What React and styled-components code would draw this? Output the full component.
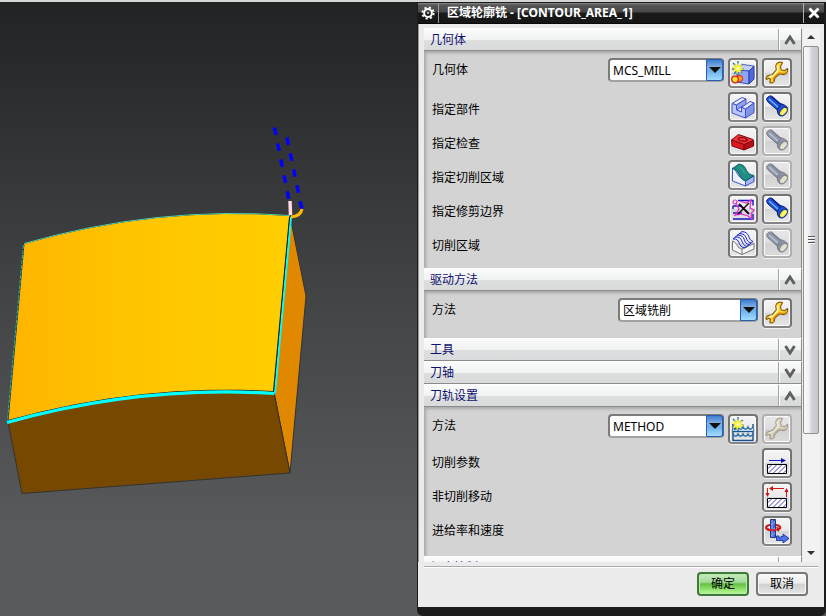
import React, { useState } from "react";
import styled, { createGlobalStyle, css } from "styled-components";

const GlobalStyle = createGlobalStyle`
  *, *::before, *::after { box-sizing: border-box; }
  body { margin: 0; background: #585858; }
  body, button, select {
    font-family: "Noto Sans", "Noto Sans CJK SC", sans-serif;
    font-size: 12px; color: #000;
  }
`;

const Screen = styled.div`
  display: flex; height: 100vh; overflow: hidden;
  border-top: 2px solid #d4d8d4;
  background: linear-gradient(#222324, #414243 45%, #58595a 85%);
`;
const Viewport = styled.main` flex: 1; min-width: 0; `;
const Scene = styled.svg` display: block; width: 100%; height: 100%; `;

const Dialog = styled.section`
  display: flex; flex-direction: column; flex: 0 0 409px;
  border: solid #1c1c1c; border-width: 1px 2px 9px 1px;
  border-radius: 0 0 6px 6px;
  background: #ebebeb;
`;

const TitleBar = styled.header`
  display: flex; align-items: stretch; height: 21px; flex-shrink: 0;
  background: linear-gradient(#8a8a8a, #565656 10%, #484848 45%, #1a1a1a 50%, #161616);
  border-bottom: 1px solid #0a0a0a;
`;
const TitleButton = styled.button`
  display: grid; place-items: center; width: 21px; padding: 0;
  border: 0; background: none;
  ${({ $side }) => ($side === "left"
    ? css` border-right: 1px solid #9a9a9a; `
    : css` border-left: 1px solid #b0b0b0; `)}
`;
const Title = styled.h1`
  flex: 1; margin: 0; padding-left: 8px;
  font-size: 12px; font-weight: 700; line-height: 19px; color: #fff; white-space: pre;
`;

const Body = styled.div`
  display: flex; flex: 1; min-height: 0; padding: 4px 4px 0 5px;
  border-left: 1px solid #9c9c9c;
`;
const Sections = styled.div`
  flex: 1; min-width: 0; overflow: hidden;
`;

const SectionHeader = styled.button`
  display: flex; align-items: stretch; width: 100%; height: 23px; padding: 0;
  border: 0; border-top: 1px solid #fff; border-bottom: 1px solid #8c8c8c;
  border-right: 1px solid #8c8c8c;
  background: linear-gradient(#fafbfb, #f1f2f2 50%, #dddfdf 55%, #d8dadb);
  color: #10106e; text-align: left;
`;
const SectionName = styled.span` flex: 1; padding-left: 6px; line-height: 21px; `;
const ChevronBox = styled.span`
  display: grid; place-items: center; width: 23px;
  border-left: 1px solid #a4a4a4; box-shadow: inset 1px 0 #fff;
`;
const SectionBody = styled.div`
  display: flex; flex-direction: column; gap: 4px;
  padding: 7px 9px 10px 8px;
  border-right: 1px solid #8c8c8c;
  background: #d3d3d3;
  box-shadow: inset 2px 2px 3px #a8a8a8;
`;

const Row = styled.div` display: flex; align-items: flex-start; gap: 4px; min-height: 30px; `;
const Label = styled.label`
  flex: 1; line-height: 24px;
  padding-top: ${({ $drop }) => $drop}px;
`;

const Combo = styled.div` position: relative; width: ${({ $wide }) => ($wide ? 140 : 116)}px; height: 24px; `;
const Select = styled.select`
  width: 100%; height: 24px; padding: 0 20px 0 3px; appearance: none;
  border: 2px solid #7b7b7b; border-right-color: #4a6b98; border-bottom-color: #a2a2a2;
  border-radius: 4px; background: #fff; outline: 0;
`;
const ComboArrow = styled.span`
  position: absolute; top: 1px; right: 1px; bottom: 1px; width: 17px;
  display: grid; place-items: center; pointer-events: none;
  border: 1px solid #2b5fae; border-radius: 0 3px 3px 0;
  background: linear-gradient(#3d7fd2, #8ab5e6 40%, #6aaeea 50%, #9fdcff);
`;

const IconButton = styled.button`
  display: grid; place-items: center; width: 30px; height: 30px; padding: 0;
  border: 2px solid #747474; border-bottom-color: #858585; border-radius: 4px;
  background: linear-gradient(#f6f6f6, #e9e9e9 48%, #d4d5d6 52%, #e8e8e8);
  box-shadow: inset 0 0 0 1px #fafafa, 0 1px #f0f0f0;
  svg { display: block; }
  &:disabled {
    border-color: #b0b0b0;
    background: linear-gradient(#e8e8e8, #dedede 50%, #d2d2d2 52%, #dcdcdc);
    svg { opacity: 0.5; filter: saturate(0.3); }
  }
`;

const ScrollBar = styled.div`
  display: flex; flex-direction: column; width: 17px; margin-left: 1px; padding-right: 1px;
  background: #f2f2f2;
`;
const ScrollArrow = styled.button`
  display: grid; place-items: center; height: 18px; padding: 0; flex-shrink: 0;
  border: 0; background: none;
`;
const Track = styled.div` flex: 1; min-height: 0; `;
const Thumb = styled.div`
  display: flex; flex-direction: column; align-items: center; justify-content: center; gap: 1px;
  height: 78%;
  border: 1px solid #909090; border-radius: 2px;
  background: linear-gradient(90deg, #fafafa, #f0f0f1 35%, #d3d3d8 55%, #c6c6cd);
`;
const Grip = styled.span` width: 7px; height: 2px; background: #555; border-bottom: 1px solid #fff; `;

const Footer = styled.footer`
  display: flex; justify-content: flex-end; gap: 7px;
  margin-top: 4px; margin-left: 6px; margin-right: 6px; padding: 5px 10px 11px 0;
  border-top: 1px solid #aaa; box-shadow: inset 0 1px #fff;
`;
const ActionButton = styled.button`
  width: 52px; height: 24px; padding: 0; line-height: 18px;
  border: 2px solid ${({ $primary }) => ($primary ? "#3f7a3b" : "#777")};
  border-radius: 4px;
  background: ${({ $primary }) => ($primary
    ? "linear-gradient(#c4ecc0, #a4dc9c 40%, #64c044 50%, #b8ff98)"
    : "linear-gradient(#fafafa, #ececec 45%, #d0d1d3 52%, #e6e6e6)")};
  box-shadow: inset 0 0 0 1px ${({ $primary }) => ($primary ? "#b9e8aa" : "#f8f8f8")};
`;

const Icon = ({ children }) => (
  <svg width="26" height="26" viewBox="0 0 26 26" fill="none" aria-hidden="true">{children}</svg>
);

const Star = () => (
  <g>
    <path d="M3 3l3.6 3.4M8 1v4M13 4l-3 2.6M2 9h3M14 9.500l-3-.5M4 14l2.500-3M12 13l-2-2M8 15v-3" stroke="#26719c" strokeWidth="1.4" />
    <path d="M8 2l1.300 4L13 4.500 11 8l3.500 1.500-4 .8L11.500 13 8.500 11.500 7 14.500 6.200 11 2.500 12l2-3L1.500 7l4-.4L4 3.500l3 2z" fill="#fff12c" />
    <circle cx="8" cy="8.500" r="1.800" fill="#fffdc0" />
  </g>
);

const NewBlockIcon = () => (
  <Icon>
    <path d="M7 10l6-5.500 11 1.500-5 5z" fill="#c3d0fc" stroke="#4a60c8" strokeLinejoin="round" />
    <path d="M7 10l12 1v13L7 22z" fill="#8fa8f4" stroke="#3a50c0" strokeLinejoin="round" />
    <path d="M19 11l5-5v13l-5 5z" fill="#5468dc" stroke="#2c3aa8" strokeLinejoin="round" />
    <circle cx="9.500" cy="18.500" r="3.200" fill="#ff9a20" stroke="#e02010" />
    <circle cx="5" cy="19.500" r="3.300" fill="#ffe23a" stroke="#e02010" strokeWidth="1.300" />
    <Star />
  </Icon>
);

const WrenchIcon = () => (
  <Icon>
    <path
      d="M18.500 2.500C15 1.500 12 3 11.800 6c-.1 2 1 3 .2 4.200L8.500 14.500C7 16 5 14.800 3.200 16.200 2 17.200 1.800 18.500 2.300 19.500l2.700-1.200 1.500 1.200L5.800 22.500c1.700 1 3.800.3 4.500-1.500.5-1.600 0-2.400 1-3.500l3.500-3c1.500-1.300 2.700.3 4.700.2 3-.2 4.700-3 4-6.200l-3 2.200-3.300-.7-.7-3.500z"
      fill="#ffd535" stroke="#8b5c10" strokeWidth="1.200" strokeLinejoin="round"
    />
    <path d="M13.500 5.500c-.4 2 1 3.500 0 5.200L9.500 15.500 5 17" stroke="#fff8ae" strokeWidth="1.600" />
    <path d="M22.500 11.500c-1 2-3 2.300-5 1.500-2-.8-3 0-4.500 1.500L9.500 18v3.500" stroke="#d98e10" strokeWidth="1.200" />
  </Icon>
);

const FlashlightIcon = () => (
  <Icon>
    <path d="M2.500 5.500C3 3 5 1.500 7.500 2L16 9.500c2.500.5 5.500 1.500 7.300 4l-7 8.300c-2-.8-3-3-3-5.800L4 8z" fill="#1c4fd6" stroke="#0b1c70" />
    <path d="M5 5l9.500 8.500" stroke="#6fb2ff" strokeWidth="1.600" />
    <path d="M8 2.800l8 7.200" stroke="#0a2290" strokeWidth="1.600" />
    <path d="M13.500 16c.5-2.500 1.700-4.300 4-5.500" stroke="#0b1c70" />
    <ellipse cx="19.500" cy="17.500" rx="5" ry="3" transform="rotate(-50 19.500 17.500)" fill="#ffed3d" stroke="#173c9c" strokeWidth="1.200" />
    <path d="M18 20l3.500-4.500" stroke="#fffbc0" />
  </Icon>
);

const PartIcon = () => (
  <Icon>
    <g stroke="#4650c8" strokeLinejoin="round">
      <path d="M2 9.500L12 3.500l4 1.500-9.500 6z" fill="#e4ebff" />
      <path d="M6.500 11L16 5v5.500l-5 3.500-4.500 2z" fill="#8fa4ec" />
      <path d="M6.500 16l6-4 4 1-5 5z" fill="#dfe6ff" />
      <path d="M11.500 13.500L20 7.500l4 1.500-8.500 6z" fill="#e4ebff" />
      <path d="M2 9.500L6.500 11v5l5 2v-4.500l4 1.500v9L2 19z" fill="#b9c8fa" />
      <path d="M15.500 15L24 9v9.500L15.500 24z" fill="#8195e6" />
    </g>
  </Icon>
);

const CheckIcon = () => (
  <Icon>
    <g stroke="#7c0a0c" strokeLinejoin="round">
      <path d="M1.500 12l7-5.500L23 11.500v2L15 17z" fill="#f5333a" />
      <path d="M1.500 12L14 16.500V22L2 18z" fill="#df1820" />
      <path d="M14 16.500l9.500-4V18L14 22z" fill="#b80e15" />
      <path d="M8 11c0-2 4-2.500 9 0 2 1.500 0 2.500-3 2.200-3 0-6-1-6-2.200z" fill="#cc1620" />
    </g>
    <path d="M10 11.500c2-.8 3.500-.4 5 .4" stroke="#f45a5a" />
  </Icon>
);

const CutAreaIcon = () => (
  <Icon>
    <path d="M2.500 6c5 2 4 10 13 12v6L2.500 19z" fill="#eef2ff" stroke="#4058d0" />
    <path d="M15.500 19l8.500-5v5.500L15.500 24z" fill="#a6b7f4" stroke="#4058d0" />
    <path d="M2.500 6.500L9 2c5 1 6 3 7.500 6.500 1.500 3 4 4.500 7.500 5L15.500 19C9 17.500 10 8 2.500 6.500z" fill="#1f8d84" stroke="#0d5e60" />
    <path d="M9 5c4 1.500 4.500 4 6 7" stroke="#359d92" strokeWidth="1.500" />
  </Icon>
);

const TrimIcon = () => (
  <Icon>
    <path d="M8 4.500h15v5M23 18v5H3M3 10h9M3 17h9M3 10v3" stroke="#1414c4" strokeWidth="1.400" />
    <circle cx="5" cy="6" r="2" stroke="#e030c8" strokeWidth="1.200" />
    <path d="M6 8l3 5-4 6 6-1 7 2 4 3-1-5 3-4-4-2 1-8-5 3-6-2" stroke="#e030c8" strokeWidth="1.300" />
    <path d="M9 8l10 10" stroke="#180818" strokeWidth="2" />
    <path d="M19 7L8 18" stroke="#180818" strokeWidth="1.500" />
  </Icon>
);

const AreaLinesIcon = () => (
  <Icon>
    <path d="M2.500 11v9L12 24.500 24 19v-5.500L12 19c-5 0-4-6-9.500-8z" fill="#f6f6f6" stroke="#777" />
    <path d="M12 19v5" stroke="#777" />
    <g stroke="#1d27d0">
      <path d="M3 9c8-1 4 8 12 9M5 7c9-1 5 8 12 9.500M7 5c10 0 5 8 12 9.800M9 3.500c10 0 5 8 12 9.500M12 1.500c9 1 5 8 11 10" />
      <path d="M3 9l9-7.500M15 18l8-6.500" />
    </g>
  </Icon>
);

const MethodIcon = () => (
  <Icon>
    <path d="M3 8v16.500h20V8" stroke="#1c4f8f" strokeWidth="1.400" />
    <path d="M3 11c2 3 4 3 5 0 1 3 4 3 5 0 1 3 4 3 5 0 1 3 3 3 5 0v4.500H3z" fill="#dcebf8" />
    <path d="M3 11c2 3 4 3 5 0 1 3 4 3 5 0 1 3 4 3 5 0 1 3 3 3 5 0M3 18c2 3 4 3 5 0 1 3 4 3 5 0 1 3 4 3 5 0 1 3 3 3 5 0" stroke="#206aa8" strokeWidth="1.300" />
    <path d="M3 15.500h20" stroke="#1c4f8f" strokeWidth="1.200" />
    <Star />
  </Icon>
);

const HatchBox = () => (
  <g>
    <path d="M3.500 14.500h19v9h-19z" fill="#fff" />
    <path d="M4 18.500l4-4M4 23.500l9-9M9 23.500l9-9M14 23.500l8.500-8.500M19 23.500l3.500-3.500" stroke="#2a2aa8" strokeWidth="0.900" />
    <path d="M3.500 14.500h19v9h-19z" stroke="#000" />
  </g>
);

const CutParamsIcon = () => (
  <Icon>
    <path d="M5 10.500h13" stroke="#1818c8" />
    <path d="M17 8l5 2.500-5 2.500z" fill="#1010b0" />
    <HatchBox />
  </Icon>
);

const NonCutIcon = () => (
  <Icon>
    <path d="M8 4.500h12M3.500 4v6M22.500 7v6" stroke="#d01818" />
    <path d="M5 4.500L9 2v5zM3.500 13L1.500 9h4zM22.500 4l-2 4h4z" fill="#d01010" />
    <HatchBox />
  </Icon>
);

const FeedIcon = () => (
  <Icon>
    <path d="M8 12.500c-5-.4-7-2-5.500-4C4 7 7 6.800 9 6.800c5 0 8 1.400 7 3.200" stroke="#c81818" strokeWidth="2" />
    <path d="M6.500 1.500h5v18h-5z" fill="#4969cf" stroke="#24378e" />
    <path d="M8 2v17M7 7l4-3M7 13l4-3M7 18l4-3" stroke="#8fa8f0" />
    <path d="M3 10c2 2.500 7 2.500 11 1.500" stroke="#dc2020" strokeWidth="1.800" />
    <path d="M12 9l5.500 1-3.500 4z" fill="#c81818" />
    <path d="M12.500 18v4.500H19V25l6-4.500L19 16v2.500h-2V20h-2v-2z" fill="#4f73e8" stroke="#2440a8" />
  </Icon>
);

const GearIcon = () => (
  <svg width="14" height="14" viewBox="0 0 14 14" fill="none" aria-hidden="true">
    <circle cx="7" cy="7" r="5.600" stroke="#f4f4f4" strokeWidth="2" strokeDasharray="2.200" />
    <circle cx="7" cy="7" r="3.900" stroke="#fff" strokeWidth="2" />
    <circle cx="7" cy="7" r="1" fill="#ddd" />
  </svg>
);

const CloseIcon = () => (
  <svg width="12" height="12" viewBox="0 0 12 12" fill="none" aria-hidden="true">
    <path d="M1.500 1.500l9 9M10.500 1.500l-9 9" stroke="#fff" strokeWidth="2.800" />
  </svg>
);

const Chevron = ({ open }) => (
  <svg width="12" height="10" viewBox="0 0 12 10" fill="none" aria-hidden="true">
    <path d={open ? "M1.500 9L6 2 10.500 9" : "M1.500 1L6 8 10.500 1"} stroke="#606060" strokeWidth="2.900" />
  </svg>
);

const Triangle = ({ up, size = 8, color = "#333" }) => (
  <svg width={size} height={size} viewBox="0 0 8 8" aria-hidden="true">
    <path d={up ? "M0 6l4-4 4 4z" : "M0 2l4 4 4-4z"} fill={color} />
  </svg>
);

const groups = [
  {
    name: "几何体",
    open: true,
    labelDrop: 6,
    rows: [
      { label: "几何体", combo: "MCS_MILL", buttons: [{ icon: NewBlockIcon, name: "新建" }, { icon: WrenchIcon, name: "编辑" }] },
      { label: "指定部件", buttons: [{ icon: PartIcon, name: "选择" }, { icon: FlashlightIcon, name: "显示" }] },
      { label: "指定检查", buttons: [{ icon: CheckIcon, name: "选择" }, { icon: FlashlightIcon, name: "显示", disabled: true }] },
      { label: "指定切削区域", buttons: [{ icon: CutAreaIcon, name: "选择" }, { icon: FlashlightIcon, name: "显示", disabled: true }] },
      { label: "指定修剪边界", buttons: [{ icon: TrimIcon, name: "选择" }, { icon: FlashlightIcon, name: "显示" }] },
      { label: "切削区域", buttons: [{ icon: AreaLinesIcon, name: "选择" }, { icon: FlashlightIcon, name: "显示", disabled: true }] },
    ],
  },
  {
    name: "驱动方法",
    open: true,
    rows: [{ label: "方法", combo: "区域铣削", wide: true, buttons: [{ icon: WrenchIcon, name: "编辑" }] }],
  },
  { name: "工具", rows: [] },
  { name: "刀轴", rows: [] },
  {
    name: "刀轨设置",
    open: true,
    labelDrop: 3,
    rows: [
      { label: "方法", combo: "METHOD", buttons: [{ icon: MethodIcon, name: "新建" }, { icon: WrenchIcon, name: "编辑", disabled: true }] },
      { label: "切削参数", buttons: [{ icon: CutParamsIcon, name: "切削参数" }] },
      { label: "非切削移动", buttons: [{ icon: NonCutIcon, name: "非切削移动" }] },
      { label: "进给率和速度", buttons: [{ icon: FeedIcon, name: "进给率和速度" }] },
    ],
  },
  { name: "机床控制", rows: [] },
];

const Field = ({ id, row, drop }) => (
  <Row>
    <Label htmlFor={id} $drop={row.combo ? 0 : drop}>{row.label}</Label>
    {row.combo && (
      <Combo $wide={row.wide}>
        <Select id={id} defaultValue={row.combo}>
          <option>{row.combo}</option>
        </Select>
        <ComboArrow><Triangle size={12} color="#111" /></ComboArrow>
      </Combo>
    )}
    {row.buttons.map(({ icon: Glyph, name, disabled }, i) => (
      <IconButton key={i} type="button" id={!row.combo && i === 0 ? id : undefined} title={name} aria-label={name} disabled={disabled}>
        <Glyph />
      </IconButton>
    ))}
  </Row>
);

const Group = ({ group, index }) => {
  const [open, setOpen] = useState(Boolean(group.open));
  return (
    <div>
      <SectionHeader type="button" aria-expanded={open} onClick={() => setOpen(!open)}>
        <SectionName>{group.name}</SectionName>
        <ChevronBox><Chevron open={open} /></ChevronBox>
      </SectionHeader>
      {open && group.rows.length > 0 && (
        <SectionBody>
          {group.rows.map((row, i) => (
            <Field key={row.label} id={`field-${index}-${i}`} row={row} drop={group.labelDrop} />
          ))}
        </SectionBody>
      )}
    </div>
  );
};

const Model = () => (
  <Scene viewBox="0 2 417 614" preserveAspectRatio="xMinYMin meet" aria-hidden="true">
    <defs>
      <linearGradient id="top" x1="0" y1="0" x2="1" y2="0">
        <stop offset="0" stopColor="#ffb400" />
        <stop offset="0.4" stopColor="#ffc400" />
        <stop offset="1" stopColor="#ffce00" />
      </linearGradient>
    </defs>
    <path d="M290 216L306 296 290 473 274 392z" fill="#e08800" stroke="#333" />
    <path d="M8 422Q141 385 274 393L290 473 22 493.500z" fill="#764800" stroke="#333" />
    <path d="M24 243.500Q157 205.500 290 215.500L274 391.500Q141 383.500 8 420.500z" fill="url(#top)" stroke="#222" />
    <path d="M24 243.500Q157 205.500 290 215.500" fill="none" stroke="#4fd0b0" strokeWidth="1" />
    <path d="M23.500 245L7.500 420" fill="none" stroke="#18b8b8" strokeWidth="1" strokeDasharray="4 1" />
    <path d="M7 422.500Q141 385 274.500 393.500" fill="none" stroke="#00ffff" strokeWidth="3.200" />
    <path d="M291 217L275 393" fill="none" stroke="#00ffff" strokeWidth="2" />
    <path d="M289.500 217L273.500 391" fill="none" stroke="#222" strokeWidth="1" />
    <path d="M274.500 127.500L289 200M287 137.500L302 210" stroke="#0000ff" strokeWidth="3.500" strokeDasharray="7.500 8.800" />
    <path d="M302 209Q301 216 291 217" fill="none" stroke="#ffb800" strokeWidth="3" />
    <path d="M290 201L290.500 215" stroke="#ffd8e4" strokeWidth="3.500" />
  </Scene>
);

const App = () => (
  <>
    <GlobalStyle />
    <Screen>
      <Viewport><Model /></Viewport>
      <Dialog>
        <TitleBar>
          <TitleButton type="button" $side="left" aria-label="选项"><GearIcon /></TitleButton>
          <Title>区域轮廓铣 - [CONTOUR_AREA_1]</Title>
          <TitleButton type="button" $side="right" aria-label="关闭"><CloseIcon /></TitleButton>
        </TitleBar>
        <Body>
          <Sections>
            {groups.map((group, i) => <Group key={group.name} group={group} index={i} />)}
          </Sections>
          <ScrollBar>
            <ScrollArrow type="button" aria-label="向上滚动"><Triangle up /></ScrollArrow>
            <Track>
              <Thumb><Grip /><Grip /><Grip /></Thumb>
            </Track>
            <ScrollArrow type="button" aria-label="向下滚动"><Triangle /></ScrollArrow>
          </ScrollBar>
        </Body>
        <Footer>
          <ActionButton type="button" $primary>确定</ActionButton>
          <ActionButton type="button">取消</ActionButton>
        </Footer>
      </Dialog>
    </Screen>
  </>
);

export default App;
